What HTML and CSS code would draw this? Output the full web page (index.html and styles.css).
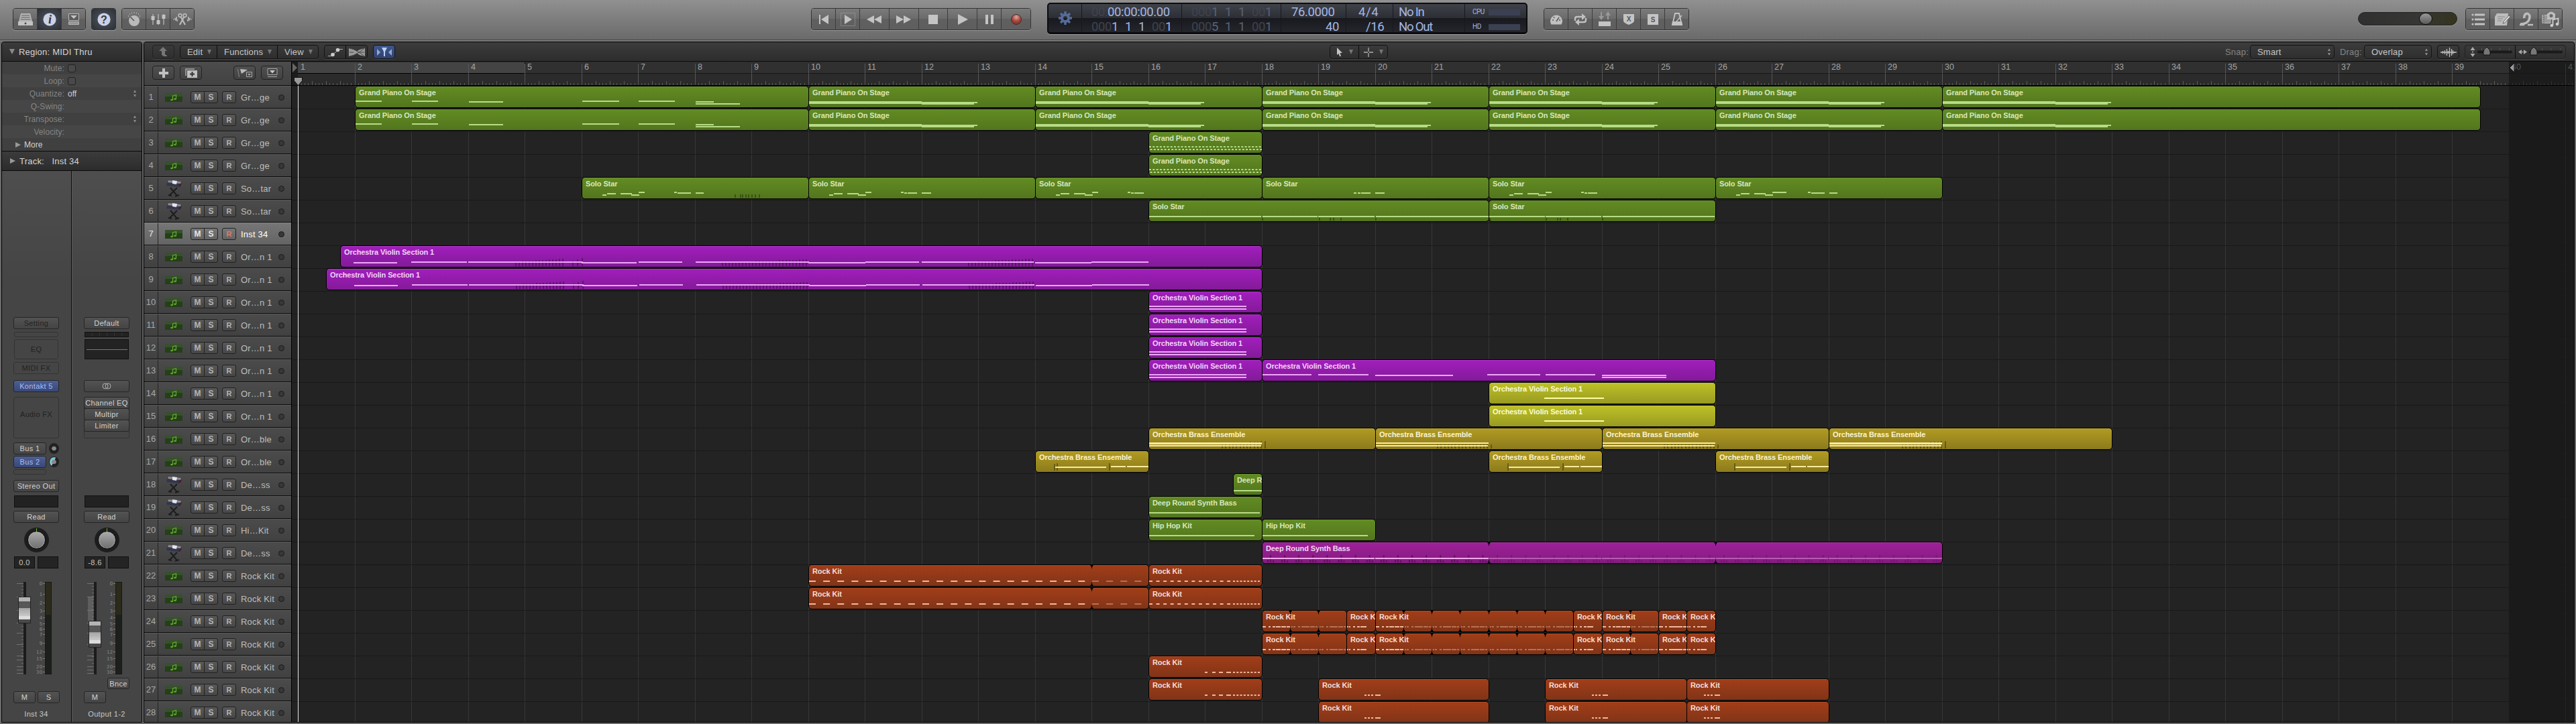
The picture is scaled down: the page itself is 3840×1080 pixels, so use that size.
FILE: index.html
```html
<!DOCTYPE html>
<html lang="en">

<head>
    <meta charset="UTF-8">
    <meta name="viewport" content="width=device-width, initial-scale=1.0">
    <title>Tracks</title>
    <link rel="stylesheet" href="styles.css">
</head>

<body>
    <!-- Control bar -->
    <header class="control-bar">
        <div class="btn-group left-a">
            <button class="btn"><svg width="24" height="22" viewBox="0 0 24 22"><path d="M5 2h14l3 12H2z" fill="#b5b5b5"/><path d="M6 5h12M5.4 8h13.2M4.6 11h14.8" stroke="#5c5c5c" stroke-width="1.2"/><path d="M1 14h22v6H1z" fill="#c2c2c2"/><circle cx="12" cy="17" r="1.4" fill="#444"/></svg></button>
            <button class="btn on"><svg width="20" height="20"><circle cx="10" cy="10" r="9.6" fill="#ccd2e4"/><text x="10.5" y="16" class="serif-glyph italic">i</text></svg></button>
            <button class="btn"><svg width="20" height="20"><path d="M2.500 1.500h15v10h-15z" fill="#5b5b5b" stroke="#b8b8b8"/><path d="M5 4h10l-5 5z" fill="#c4c4c4"/><path d="M2.500 13.500h15v4h-15z" fill="#969696" stroke="#b5b5b5"/></svg></button>
        </div>
        <div class="btn-group left-b">
            <button class="btn on"><svg width="20" height="20"><circle cx="10" cy="10" r="9.6" fill="#ccd2e4"/><text x="10" y="15.500" class="question-glyph">?</text></svg></button>
        </div>
        <div class="btn-group left-c">
            <button class="btn"><svg width="22" height="22"><circle cx="11" cy="13" r="8" fill="#bababa"/><path d="M11 13L5.500 7.500" stroke="#555" stroke-width="1.6"/><path d="M2 6h1M4 3h1M7 1.500h1M10.500 1h1M14 1.500h1M17 3h1M19 6h1" stroke="#c0c0c0" stroke-width="1.6"/></svg></button>
            <button class="btn"><svg width="22" height="20"><path d="M3 2v16M11 2v16M19 2v16" stroke="#b8b8b8" stroke-width="1.3"/><path d="M.500 5h5v6h-5zM8.500 11h5v6h-5zM16.500 3h5v6h-5z" fill="#c2c2c2"/></svg></button>
            <button class="btn"><svg width="28" height="20" fill="none" stroke="#b8b8b8"><path d="M0 10h2l1-2 1 4 1-6 1 7 1-3M28 10h-2l-1-2-1 4-1-6-1 7-1-3"/><circle cx="10.500" cy="4" r="2.400" stroke-width="1.6"/><circle cx="17.500" cy="4" r="2.400" stroke-width="1.6"/><path d="M11.500 6l6.500 12M16.500 6L10 18" stroke-width="2.300"/></svg></button>
        </div>

        <div class="btn-group transport">
            <button class="btn"><svg width="16" height="16" fill="#c4c4c4"><path d="M1 1h2v14H1zM15 1v14L4 8z"/></svg></button>
            <button class="btn"><svg width="24" height="22"><path d="M1.500 1.500h21v19h-21z" fill="none" stroke="#aaa" stroke-dasharray="1 1"/><path d="M7 4l11 7-11 7z" fill="#c4c4c4"/></svg></button>
            <button class="btn wide"><svg width="22" height="14" fill="#c4c4c4"><path d="M11 1v12L0 7zM22 1v12L11 7z"/></svg></button>
            <button class="btn wide"><svg width="22" height="14" fill="#c4c4c4"><path d="M0 1v12l11-6zM11 1v12l11-6z"/></svg></button>
            <button class="btn wide"><svg width="14" height="14" fill="#c4c4c4"><path d="M0 0h14v14H0z"/></svg></button>
            <button class="btn wide"><svg width="16" height="18" fill="#c4c4c4"><path d="M1 1v16l15-8z"/></svg></button>
            <button class="btn"><svg width="14" height="16" fill="#c4c4c4"><path d="M1 1h4v14H1zM9 1h4v14H9z"/></svg></button>
            <button class="btn wide"><span class="record"></span></button>
        </div>

        <div class="lcd">
            <div class="lcd-cell gear"><svg width="20" height="20" viewBox="-10 -10 20 20"><circle r="5" fill="none" stroke="#566b98" stroke-width="4"/><path d="M0-10V-6M0 10V6M-10 0H-6M10 0H6M-7-7l3 3M7 7L4 4M-7 7l3-3M7-7L4-4" stroke="#566b98" stroke-width="3.500"/></svg></div>
            <div class="lcd-cell time"><p><i>00:</i>00:00:00.00</p><p class="cells"><i>000</i>1 1 1 <i>00</i>1</p></div>
            <div class="lcd-cell locators"><p class="cells"><i>000</i>1 1 1 <i>00</i>1</p><p class="cells"><i>000</i>5 1 1 <i>00</i>1</p></div>
            <div class="lcd-cell tempo"><p>76.0000</p><p>40</p></div>
            <div class="lcd-cell sign"><p>4<b>/</b>4</p><p>/16</p></div>
            <div class="lcd-cell io"><p>No In</p><p>No Out</p></div>
            <div class="lcd-cell load"><p>CPU<span class="load-meter"></span></p><p>HD<span class="load-meter"></span></p></div>
        </div>

        <div class="btn-group modes">
            <button class="btn"><svg width="20" height="18"><path d="M2.500 16.500a9 9 0 1 1 15 0z" fill="#c0c0c0"/><path d="M10 12l4-6M4 10h2M6 5l1 2M14 10h2" stroke="#555" stroke-width="1.400"/></svg></button>
            <button class="btn"><svg width="22" height="18" fill="none" stroke="#c0c0c0" stroke-width="2.400"><path d="M3 11V8q0-3 3-3h8M19 7v3q0 3-3 3H8"/><path d="M13 0l6 5-6 5zM9 8l-6 5 6 5z" fill="#c0c0c0" stroke="none"/></svg></button>
            <button class="btn"><svg width="24" height="24"><path d="M7 1v8M17 12V3" stroke="#999" stroke-width="2"/><path d="M3 7h8l-4 6zM13 6h8l-4-6z" fill="#999"/><path d="M3 15h18v7H3z" fill="#c4c4c4"/></svg></button>
            <button class="btn"><svg width="16" height="16"><path d="M0 0h16v10q0 3-8 6-8-3-8-6z" fill="#c4c4c4"/><text x="8" y="11" class="tiny-glyph">X</text></svg></button>
            <button class="btn"><svg width="16" height="16"><path d="M0 0h16v16H0z" fill="#c4c4c4"/><text x="8" y="12" class="tiny-glyph">S</text></svg></button>
            <button class="btn"><svg width="18" height="19"><path d="M6 1h6l4 17H2z" fill="none" stroke="#c4c4c4" stroke-width="1.800"/><path d="M2 13h14l1 5H1z" fill="#c4c4c4"/><path d="M8 13l8-9" stroke="#c4c4c4" stroke-width="1.500"/></svg></button>
        </div>

        <div class="volume"><span class="volume-thumb"></span></div>

        <div class="btn-group panes">
            <button class="btn"><svg width="20" height="20" fill="#c2c2c2"><circle cx="2" cy="3" r="1.600"/><circle cx="2" cy="10" r="1.600"/><circle cx="2" cy="17" r="1.600"/><path d="M5 1.500h15v3H5zM5 8.500h15v3H5zM5 15.500h15v3H5z"/></svg></button>
            <button class="btn"><svg width="24" height="22"><path d="M4 2h17l-2 18H1V7z" fill="#bdbdbd"/><path d="M5 7h11M5 10h8M5 13h6" stroke="#888"/><path d="M22 5l-8 9-1 3 3-1 8-9z" fill="#ddd" stroke="#666"/></svg></button>
            <button class="btn"><svg width="22" height="24" fill="none" stroke="#bdbdbd"><path d="M8 10a4 5 0 1 1 8-3q0 7-5 10-4 2-9 2" stroke-width="3.500"/><path d="M1 20h7M13 20h8" stroke-width="2.500"/></svg></button>
            <button class="btn"><svg width="28" height="24"><path d="M2 5.500h12v12H2z" fill="#999" stroke="#bbb"/><path d="M4 5v13" stroke="#555" stroke-dasharray="2 1"/><path d="M9 3h12v9H9z" fill="#bdbdbd"/><circle cx="15" cy="6" r="5.500" fill="#bdbdbd"/><circle cx="15" cy="6.500" r="2.500" fill="#666"/><path d="M17.500 21V12.500l8-2V19" fill="none" stroke="#ccc" stroke-width="1.800"/><circle cx="15.800" cy="21" r="2.300" fill="#ccc"/><circle cx="24" cy="19" r="2.300" fill="#ccc"/></svg></button>
        </div>
    </header>

    <main class="workspace">
        <!-- Inspector -->
        <aside class="inspector">
            <h2 class="section-head"><span class="tri down"></span>Region: MIDI Thru</h2>
            <ul class="params">
                <li><label>Mute:</label><span class="check"></span></li>
                <li><label>Loop:</label><span class="check"></span></li>
                <li><label>Quantize:</label><span class="value">off</span><span class="stepper"></span></li>
                <li><label>Q-Swing:</label></li>
                <li><label>Transpose:</label><span class="stepper"></span></li>
                <li><label>Velocity:</label></li>
                <li class="more"><span class="tri right"></span>More</li>
            </ul>
            <h2 class="section-head track-head"><span class="tri right"></span>Track:&nbsp;&nbsp; Inst 34</h2>

            <div class="strips">
                <section class="strip">
                    <div class="slot off">Setting</div>
                    <div class="slot hollow reduction"></div>
                    <div class="slot hollow eq">EQ</div>
                    <div class="slot hollow midi">MIDI FX</div>
                    <div class="slot blue instrument">Kontakt 5</div>
                    <div class="slot hollow fx">Audio FX</div>
                    <div class="send send-1"><div class="slot">Bus 1</div><span class="send-knob"></span></div>
                    <div class="send send-2"><div class="slot blue">Bus 2</div><span class="send-knob lit"></span></div>
                    <div class="slot hollow send-empty"></div>
                    <div class="slot output">Stereo Out</div>
                    <div class="group-box"></div>
                    <div class="slot mode">Read</div>
                    <div class="pan"><span class="pan-cap"></span></div>
                    <div class="readouts"><span>0.0</span><span></span></div>
                    <div class="fader" data-cap="22"></div>
                    <div class="bounce-row"></div>
                    <div class="ms-row"><div class="slot">M</div><div class="slot">S</div></div>
                    <div class="strip-name">Inst 34</div>
                </section>
                <section class="strip">
                    <div class="slot">Default</div>
                    <div class="reduction-on"></div>
                    <div class="eq-curve"></div>
                    <div class="midi-gap"></div>
                    <div class="slot instrument"><svg width="14" height="10" fill="none" stroke="#b0b0b0"><circle cx="5" cy="5" r="4"/><circle cx="9" cy="5" r="4"/></svg></div>
                    <div class="slot hollow fx stack"><div class="slot">Channel EQ</div><div class="slot">Multipr</div><div class="slot">Limiter</div></div>
                    <div class="out-gap"></div>
                    <div class="group-box"></div>
                    <div class="slot mode">Read</div>
                    <div class="pan"><span class="pan-cap"></span></div>
                    <div class="readouts"><span>-8.6</span><span></span></div>
                    <div class="fader" data-cap="58" data-mesh="36"></div>
                    <div class="bounce-row"><div class="slot">Bnce</div></div>
                    <div class="ms-row"><div class="slot">M</div></div>
                    <div class="strip-name">Output 1-2</div>
                </section>
            </div>
        </aside>

        <!-- Tracks area -->
        <section class="tracks-area">
            <div class="tracks-bar">
                <div class="tool faint"><svg width="14" height="15"><path d="M6 0l6 6H9v5l3 2v1H8q-3 0-4-3V6H0z" fill="#777"/></svg></div>
                <div class="menus"><span class="edit">Edit<em class="tri down"></em></span><span class="functions">Functions<em class="tri down"></em></span><span class="view">View<em class="tri down"></em></span></div>
                <div class="pair">
                    <span><svg width="22" height="14"><path d="M0 12.500h6M6 11l9-7M16 2.500h6" stroke="#aaa" fill="none"/><circle cx="7" cy="10.500" r="2.800" fill="#ccc"/><circle cx="14.500" cy="3.500" r="2.800" fill="#ccc"/></svg></span>
                    <span><svg width="24" height="14"><path d="M0 1q8 1 12 4.500Q16 2 24 1v12q-8-1-12-4.500Q8 12 0 13z" fill="#999"/><path d="M1 7h6M23 7h-6M1 1q11 2 22 12M1 13Q12 11 23 1" stroke="#444" fill="none"/></svg></span>
                </div>
                <div class="tool blue-tool"><svg width="22" height="16" fill="#b9d0ff"><path d="M7 1h8l-3 6v7h-2V7z"/><path d="M0 3l5 5-5 5zM22 3l-5 5 5 5z" opacity=".7"/></svg></div>
                <div class="pair pointers">
                    <span><svg width="10" height="14"><path d="M1 0l8 8H5.500L7 13H5L3.500 9 1 11z" fill="#c4c4c4"/></svg><em class="tri down"></em></span>
                    <span><svg width="14" height="14"><path d="M7 0v6M7 8v6M0 7h6M8 7h6" stroke="#b0b0b0" stroke-width="1.300"/></svg><em class="tri down"></em></span>
                </div>
                <div class="bar-label snap">Snap:</div>
                <div class="select snap-select">Smart<span class="stepper"></span></div>
                <div class="bar-label drag">Drag:</div>
                <div class="select drag-select">Overlap<span class="stepper"></span></div>
                <div class="tool wave"><svg width="24" height="14" stroke="#c0c0c0" stroke-width="1.300"><path d="M0 7h24M3.500 5v4M6.500 4v6M9.500 2v10M11.500 5v4M13.500 0v14M16.500 2v10M18.500 4v6M20.500 6v2"/></svg></div>
                <div class="zooms">
                    <span><svg width="74" height="20"><path d="M11 2l3.500 5h-7zM11 17l3.500-5h-7z" fill="#aaa"/><circle cx="11" cy="9.500" r="1.100" fill="#aaa"/><path d="M20 9.500h48" stroke="#1a1a1a" stroke-width="4" stroke-linecap="round"/><path d="M24.500 4v3M28.500 4v3M38.500 4v3M51.500 4v3M65.500 4v3" stroke="#555"/><path d="M32 2q5 4 5 7v5H27V9q0-3 5-7z" fill="#777" stroke="#111"/></svg></span>
                    <span><svg width="74" height="20"><path d="M4 9.500l5-3.500v7zM17 9.500l-5-3.500v7z" fill="#aaa"/><circle cx="10.500" cy="9.500" r="1" fill="#aaa"/><path d="M22 9.500h46" stroke="#1a1a1a" stroke-width="4" stroke-linecap="round"/><path d="M39.500 4v3M52.500 4v3M66.500 4v3" stroke="#555"/><path d="M27 2q5 4 5 7v5H22V9q0-3 5-7z" fill="#777" stroke="#111"/></svg></span>
                </div>
            </div>

            <div class="tracks-body">
                <div class="track-list">
                    <div class="list-head">
                        <div class="tool"><svg width="14" height="14"><path d="M5 0h4v5h5v4H9v5H5V9H0V5h5z" fill="#c0c0c0"/></svg></div>
                        <div class="tool"><svg width="18" height="14"><path d="M1 11V1h13" fill="none" stroke="#aaa" stroke-width="1.500"/><path d="M3 3h15v11H3z" fill="#c0c0c0"/><path d="M10.500 5v7M7 8.500h7" stroke="#333" stroke-width="2"/></svg></div>
                        <div class="tool third"><svg width="24" height="14"><path d="M1.500 1l2 12" stroke="#888"/><path d="M5 1l11 1-9 6z" fill="#bbb"/><path d="M14.500 5.500h8v7h-8z" fill="none" stroke="#aaa"/><path d="M16 8h5l-2.500 3z" fill="#aaa"/></svg></div>
                        <div class="tool"><svg width="16" height="14"><path d="M1 .500h14v9H1zM1 12.500h14" fill="#444" stroke="#aaa"/><path d="M4 3h8L8 7.500z" fill="#ccc"/></svg></div>
                    </div>
                    <div id="trackRows"></div>
                </div>
                <div class="timeline" id="timeline">
                    <svg class="ruler" id="ruler" width="3402" height="36"></svg>
                    <svg class="grid" id="grid" width="3402" height="949"></svg>
                    <div class="regions" id="regions"></div>
                    <div class="playhead"><svg width="15" height="14"><path d="M1.500 1.500h12v5l-6 7-6-7z" fill="#999" stroke="#111"/></svg></div>
                </div>
            </div>
        </section>
    </main>

    <script src="script.js"></script>
</body>

</html>
```

FILE: styles.css
```css
* {
    box-sizing: border-box;
}

body {
    margin: 0;
    width: 3840px;
    height: 1080px;
    overflow: hidden;
    display: flex;
    flex-direction: column;
    background: #6a6a6a;
    color: #c6c6c6;
    font-family: "Liberation Sans", Arial, sans-serif;
    font-size: 13px;
}

svg {
    display: block;
    flex: none;
}

p,
ul,
h2 {
    margin: 0;
    padding: 0;
}

/* Control bar */
.control-bar {
    height: 62px;
    flex: none;
    display: flex;
    align-items: flex-start;
    padding: 12px 20px 0 19px;
    background: linear-gradient(#909090, #6a6a6a 59px, #444 59px, #444 60px, #7c7c7c 60px);
}

.btn-group {
    display: flex;
    height: 33px;
    border: 1px solid #343434;
    border-radius: 4px;
    box-shadow: 0 1px 0 #9a9a9a;
    overflow: hidden;
}

.btn {
    flex: 1;
    display: flex;
    align-items: center;
    justify-content: center;
    padding: 0;
    border: none;
    border-left: 1px solid #3c3c3c;
    background: linear-gradient(#7b7b7b, #6a6a6a 50%, #606060 50%, #5e5e5e);
}

.btn:first-child {
    border-left: none;
}

.btn.on {
    background: radial-gradient(#525862, #2b2e34);
}

.left-a,
.left-c {
    width: 109px;
}

.left-b {
    width: 37px;
    margin: 0 8px;
}

.transport {
    width: 328px;
    margin-left: 919px;
}

.transport .btn {
    flex: 36;
}

.transport .btn.wide {
    flex: 44;
}

.record {
    width: 16px;
    height: 16px;
    border-radius: 50%;
    border: 1px solid #4a2a28;
    background: radial-gradient(circle at 50% 25%, #e0a8a0, #a4453c 50%, #7c2a25);
}

.serif-glyph {
    font: italic bold 18px "Liberation Serif", serif;
    text-anchor: middle;
    fill: #33373f;
}

.question-glyph {
    font: bold 16px "Liberation Sans", sans-serif;
    text-anchor: middle;
    fill: #33373f;
}

.tiny-glyph {
    font: bold 10px "Liberation Sans", sans-serif;
    text-anchor: middle;
    fill: #555;
}

/* LCD */
.lcd {
    display: flex;
    width: 716px;
    height: 47px;
    margin: -8px 0 0 24px;
    border: 2px solid #0c0c0f;
    border-bottom-width: 3px;
    border-radius: 5px;
    box-shadow: 0 1px 0 #a0a0a0;
    background: linear-gradient(#40424a, #2c2e35 50%, #17191e 50%, #24262c);
    color: #a4b8e4;
    font-family: Roboto, sans-serif;
    font-size: 18.500px;
    letter-spacing: -.4px;
}

.lcd-cell {
    border-left: 1px solid #17181c;
    padding-top: 1px;
}

.lcd-cell p {
    height: 22px;
    line-height: 22px;
    white-space: nowrap;
}

.lcd-cell i {
    font-style: normal;
    color: #3f434d;
}

.gear {
    width: 49px;
    border-left: none;
    display: flex;
    align-items: center;
    justify-content: center;
    padding: 0;
}

.time {
    width: 149px;
    padding-left: 14px;
}

.cells {
    word-spacing: 5.800px;
}

.locators {
    width: 148px;
    padding-left: 14px;
    color: #5a6377;
}

.tempo {
    width: 97px;
    padding-left: 15px;
}

.tempo p + p {
    padding-left: 51px;
}

.sign {
    width: 70px;
    padding-left: 18px;
}

.sign b {
    font-weight: 400;
    margin: 0 1px;
}

.sign p + p {
    padding-left: 11px;
}

.io {
    width: 107px;
    padding-left: 8px;
    letter-spacing: -1.200px;
}

.load {
    flex: 1;
    padding-left: 11px;
    font-size: 10px;
    letter-spacing: -.5px;
}

.load p {
    display: flex;
    align-items: center;
    justify-content: space-between;
    padding-right: 9px;
}

.load-meter {
    width: 47px;
    height: 9px;
    background: #3b4152;
}

.modes {
    width: 217px;
    margin-left: 24px;
}

.volume {
    width: 148px;
    height: 20px;
    margin: 6px 0 0 997px;
    border-radius: 10px;
    border: 1px solid #222;
    background: linear-gradient(90deg, #2f302f, #363734 60%, #35331e);
    box-shadow: 0 1px 0 #999;
    padding-left: 90px;
}

.volume-thumb {
    display: block;
    width: 20px;
    height: 18px;
    border-radius: 50%;
    border: 1px solid #111;
    background: linear-gradient(#999, #5a5a5a);
}

.panes {
    width: 145px;
    margin-left: 12px;
}

/* Workspace */
.workspace {
    display: flex;
    height: 1016px;
    padding-left: 2px;
}

.inspector {
    width: 210px;
    border: 1px solid #000;
    border-radius: 4px 4px 0 0;
    display: flex;
    flex-direction: column;
    background: #454545;
    overflow: hidden;
}

.section-head {
    display: flex;
    align-items: center;
    height: 29px;
    flex: none;
    padding-left: 11px;
    font-size: 13px;
    font-weight: 400;
    letter-spacing: .22px;
    color: #d4d4d4;
    background: linear-gradient(#3b3b3b, #2c2c2c);
    border-bottom: 1px solid #0a0a0a;
}

.track-head {
    border-top: 1px solid #0a0a0a;
    height: 30px;
}

.tri {
    display: inline-block;
    border: 4px solid transparent;
}

.tri.down {
    border-top: 8px solid #8a8a8a;
    border-bottom: none;
}

.tri.right {
    border-left: 8px solid #999;
    border-right: none;
}

.section-head .tri {
    margin-right: 6px;
}

.section-head .tri.right {
    margin-left: 1px;
}

.params {
    list-style: none;
    height: 133px;
    flex: none;
}

.params li {
    display: flex;
    align-items: center;
    height: 19px;
    color: #d0d0d0;
    font-size: 12px;
    background: #404040;
}

.params li:nth-child(even) {
    background: #464646;
}

.params label {
    width: 93px;
    text-align: right;
    color: #858585;
    letter-spacing: .1px;
    margin-right: 5px;
}

.check {
    width: 12px;
    height: 12px;
    border: 1px solid #222;
    border-radius: 3px;
    background: #494949;
}

.params .more {
    padding-left: 20px;
    gap: 5px;
}

.stepper {
    width: 6px;
    height: 11px;
    margin-left: auto;
    background:
        conic-gradient(from 153deg at 50% 0, #888 54deg, transparent 0) top / 6px 4px no-repeat,
        conic-gradient(from -27deg at 50% 100%, #888 54deg, transparent 0) bottom / 6px 4px no-repeat;
}

.params .stepper {
    margin-right: 7px;
}

/* Channel strips */
.strips {
    display: flex;
    flex: 1;
    background: linear-gradient(#4e4e4e, #454545 20%);
}

.strip {
    width: 104px;
    padding: 218px 18px 0 17px;
    border-right: 1px solid #0c0c0c;
    display: flex;
    flex-direction: column;
    font-size: 11px;
    letter-spacing: .35px;
}

.strip > * {
    flex: none;
}

.strip + .strip {
    border-left: 1px solid #5a5a5a;
    border-right: none;
}

.slot {
    height: 18px;
    display: flex;
    align-items: center;
    justify-content: center;
    white-space: nowrap;
    border: 1px solid #262626;
    border-radius: 3px;
    background: linear-gradient(#535353, #444);
    color: #d2d2d2;
    flex: none;
}

.slot.off {
    color: #222;
}

.slot.hollow {
    background: none;
    border-color: #333;
    color: #222;
}

.slot.blue {
    background: linear-gradient(#4d5f94, #384876);
    color: #a9bcf8;
}

.slot.reduction,
.reduction-on {
    height: 8px;
    margin: 4px 1px 0;
}

.reduction-on {
    border: 1px solid #111;
    background: repeating-linear-gradient(90deg, #222 0 10px, #333 10px 11px);
}

.slot.eq,
.eq-curve {
    height: 30px;
    margin: 3px 1px 0;
}

.eq-curve {
    border: 1px solid #111;
    background: linear-gradient(transparent 14px, #777 14px, #777 15px, transparent 15px) center / 61px no-repeat, #232323;
}

.slot.midi {
    height: 18px;
    margin-top: 4px;
}

.midi-gap {
    height: 22px;
}

.instrument {
    margin-top: 9px;
}

.slot.fx {
    height: 62px;
    margin-top: 7px;
    padding-bottom: 10px;
}

.slot.fx.stack {
    flex-direction: column;
    justify-content: flex-start;
    align-items: stretch;
    padding: 0;
}

.stack .slot {
    height: 18px;
    margin: 0 -1px -1px;
}

.stack .slot:first-child {
    margin-top: -1px;
}

.send {
    display: flex;
    gap: 4px;
}

.send .slot {
    width: 49px;
}

.send-1 {
    margin-top: 6px;
}

.send-2 {
    margin-top: 2px;
}

.send-knob {
    width: 16px;
    height: 16px;
    margin-top: 1px;
    border-radius: 50%;
    border: 1px solid #222;
    background: radial-gradient(circle, #888 0 3px, #222 3.500px);
}

.send-knob.lit {
    background: radial-gradient(circle, #888 0 3px, transparent 3.500px), conic-gradient(from 210deg, #7fc3d4 170deg, #222 0);
}

.slot.send-empty {
    width: 49px;
    height: 8px;
    margin-top: 2px;
}

.output {
    margin-top: 8px;
}

.out-gap {
    height: 80px;
}

.group-box {
    height: 18px;
    margin: 5px 1px 0;
    border: 1px solid #111;
    background: #222;
}

.mode {
    margin-top: 5px;
}

.pan {
    width: 37px;
    height: 37px;
    margin: 7px auto 0;
    border-radius: 50%;
    background: #1d1d1d;
    padding: 5px;
}

.pan-cap {
    display: block;
    width: 27px;
    height: 27px;
    border-radius: 50%;
    border: 1px solid #0a0a0a;
    background: linear-gradient(#ababab, #6f6f6f);
    box-shadow: inset 0 0 0 1px #aaa;
    position: relative;
}

.pan-cap::before {
    content: "";
    position: absolute;
    left: 12px;
    top: -5px;
    width: 1px;
    height: 5px;
    background: #6ab52c;
}

.readouts {
    display: flex;
    justify-content: space-between;
    margin: 6px 1px 0;
}

.readouts span {
    width: 31px;
    height: 18px;
    line-height: 16px;
    text-align: center;
    border: 1px solid #101010;
    background: #242424;
}

.fader {
    height: 144px;
    margin-top: 14px;
}

.fader-label {
    font: 7px "DejaVu Sans", sans-serif;
    text-anchor: end;
    fill: #8a8a8a;
}

.bounce-row {
    height: 17px;
    margin-top: 5px;
    display: flex;
    justify-content: flex-end;
}

.bounce-row .slot {
    width: 33px;
    height: 17px;
}

.ms-row {
    display: flex;
    gap: 3px;
    margin-top: 3px;
}

.ms-row .slot {
    width: 33px;
}

.strip-name {
    margin: 10px -10px 0;
    line-height: 13px;
    text-align: center;
    white-space: nowrap;
}

/* Tracks toolbar */
.tracks-area {
    width: 3624px;
    margin-left: 2px;
    border: 1px solid #000;
    border-radius: 4px 4px 0 0;
    background: #232323;
    overflow: hidden;
}

.tracks-bar {
    display: flex;
    align-items: flex-start;
    height: 29px;
    padding: 4px 0 0 12px;
    border-bottom: 1px solid #0a0a0a;
    background: linear-gradient(#3c3c3c, #2d2d2d);
    letter-spacing: .2px;
}

.tool,
.menus,
.pair,
.select,
.zooms {
    height: 21px;
    border: 1px solid #141414;
    border-radius: 4px;
    background: linear-gradient(#3a3a3a, #2e2e2e);
    box-shadow: 0 1px 0 #454545;
    display: flex;
    align-items: center;
    flex: none;
}

.tool {
    width: 33px;
    justify-content: center;
}

.faint {
    border-color: #222;
}

.menus {
    width: 207px;
    margin-left: 8px;
}

.menus span,
.pair span,
.zooms span {
    display: flex;
    height: 100%;
    align-items: center;
    border-left: 1px solid #0c0c0c;
}

.menus span:first-child,
.pair span:first-child,
.zooms span:first-child {
    border-left: none;
}

.menus span {
    padding-left: 10px;
    gap: 7px;
}

.tracks-bar .tri {
    border-width: 3.500px;
    border-top: 7px solid #777;
    border-bottom: none;
}

.edit {
    width: 54px;
}

.functions {
    width: 90px;
}

.pair {
    width: 65px;
    margin-left: 8px;
}

.pair span {
    flex: 1;
    justify-content: center;
}

.blue-tool {
    margin-left: 8px;
    background: linear-gradient(#40568c, #30416c);
}

.pointers {
    width: 87px;
    margin-left: 1393px;
}

.pointers span {
    gap: 9px;
}

.bar-label {
    line-height: 21px;
    color: #858585;
}

.snap {
    width: 37px;
    margin-left: 1248px;
}

.drag {
    width: 36px;
    margin-left: 8px;
}

.select {
    padding: 0 4px 0 10px;
}

.snap-select {
    width: 126px;
}

.drag-select {
    width: 101px;
}

.wave {
    margin-left: 8px;
}

.zooms {
    width: 151px;
    margin-left: 8px;
    border-color: #222;
}

/* Track list */
.tracks-body {
    display: flex;
}

.track-list {
    width: 220px;
    flex: none;
    border-right: 1px solid #000;
}

.list-head {
    display: flex;
    gap: 8px;
    height: 36px;
    padding: 6px 0 0 12px;
    background: linear-gradient(#4c4c4c, #424242);
    border-bottom: 1px solid #0a0a0a;
}

.list-head .tool {
    border-color: #222;
    background: linear-gradient(#505050, #414141);
}

.list-head .third {
    margin-left: 39px;
}

.track {
    display: flex;
    align-items: center;
    height: 34px;
    border-top: 1px solid #595959;
    border-bottom: 1px solid #0c0c0c;
    background: linear-gradient(#4b4b4b, #414141);
    color: #bebebe;
}

.track-no {
    width: 21px;
    height: 32px;
    line-height: 32px;
    text-align: center;
    border-right: 1px solid #242424;
    color: #a9a9a9;
}

.track-icon {
    width: 26px;
    margin: 0 12px 0 10px;
}

.ms,
.rec {
    display: flex;
    height: 18px;
    border: 1px solid #212121;
    border-radius: 3px;
    background: linear-gradient(#585858, #474747);
    font-size: 12px;
    font-weight: bold;
    color: #b4b4b4;
    line-height: 16px;
    text-align: center;
}

.ms {
    width: 41px;
}

.ms span {
    flex: 1;
}

.ms span + span {
    border-left: 1px solid #212121;
}

.rec {
    width: 21px;
    margin: 0 7px 0 6px;
    justify-content: center;
    font-size: 11px;
}

.track-name {
    width: 56px;
    white-space: nowrap;
    letter-spacing: .2px;
}

.freeze {
    width: 9px;
    height: 9px;
    border: 1px solid #1b1b1b;
    border-radius: 50%;
    background: #373737;
}

.track.selected {
    background: linear-gradient(#767676, #646464);
    border-top-color: #858585;
    color: #fff;
}

.track.selected .track-no,
.track.selected .ms {
    color: #e6e6e6;
}

.track.selected .ms,
.track.selected .rec {
    background: linear-gradient(#777, #626262);
}

.track.selected .rec {
    color: #e07a68;
}

/* Timeline: regions sit on a free canvas by bar position */
.timeline {
    position: relative;
    width: 3402px;
    overflow: hidden;
}

.ruler-no {
    font: 12.500px "Liberation Sans", sans-serif;
    fill: #a4a4a4;
}

.regions {
    position: absolute;
    left: 0;
    top: 36px;
}

.region {
    position: absolute;
    height: 33px;
    border: 1px solid #000;
    border-radius: 5px;
    overflow: hidden;
}

.region-name {
    position: absolute;
    left: 5px;
    top: 3px;
    font-size: 11px;
    line-height: 13px;
    font-weight: bold;
    letter-spacing: -.1px;
    white-space: nowrap;
}

.region svg {
    position: absolute;
    left: 0;
    top: -1px;
}

.green {
    background: linear-gradient(#7aa044, #628b22 1px, #53751e);
    color: #d8e6bc;
    fill: #b7dc86;
}

.purple {
    background: linear-gradient(#bd4fd2, #a11ebc 1px, #831a98);
    color: #f1d3f8;
    fill: #efa6fb;
}

.magenta {
    background: linear-gradient(#b54db0, #9d2098 1px, #841c80);
    color: #f3d4f1;
    fill: #f3a7ee;
}

.yellow {
    background: linear-gradient(#ced05a, #bdc026 1px, #989a22);
    color: #fbfbd2;
    fill: #fefea2;
}

.gold {
    background: linear-gradient(#c4b153, #b09a22 1px, #8c7b1d);
    color: #fbf3cf;
    fill: #fbeb9c;
}

.orange {
    background: linear-gradient(#b8603d, #a13d18 1px, #813418);
    color: #f5ded5;
    fill: #f4b69a;
}

.playhead {
    position: absolute;
    left: 9px;
    top: 36px;
    width: 1px;
    height: 949px;
    background: #e4e4e4;
}

.playhead svg {
    position: absolute;
    left: -7px;
    top: -14px;
}
```

FILE: script.js
```js
const BAR = 84.5;
const ROW = 34;
const barX = n => Math.floor(9.5 + BAR * (n - 1));

// ---------- track headers ----------
const names = ["Gr…ge", "Gr…ge", "Gr…ge", "Gr…ge", "So…tar", "So…tar", "Inst 34",
    "Or…n 1", "Or…n 1", "Or…n 1", "Or…n 1", "Or…n 1", "Or…n 1", "Or…n 1", "Or…n 1",
    "Or…ble", "Or…ble", "De…ss", "De…ss", "Hi…Kit", "De…ss",
    "Rock Kit", "Rock Kit", "Rock Kit", "Rock Kit", "Rock Kit", "Rock Kit", "Rock Kit"];
const keyboards = [5, 6, 18, 19, 21];

const noteIcon = `<svg class="track-icon" width="26" height="13"><rect width="26" height="13" fill="#243f19"/>
    <rect width="26" height="5" fill="#35522a"/><path d="M11.500 10V4l5-1.500v6" fill="none" stroke="#62a52c" stroke-width="1.300"/>
    <ellipse cx="10" cy="10" rx="1.900" ry="1.300" fill="#62a52c"/><ellipse cx="15" cy="8.800" rx="1.900" ry="1.300" fill="#62a52c"/></svg>`;
const keysIcon = `<svg class="track-icon" width="26" height="28"><path d="M8 13l10 12M18 13L7 24M5 24l5 1M15 26l6-2" stroke="#1d1d1f" stroke-width="2"/>
    <path d="M4 2l21 2-3 8-20-2z" fill="#34364d"/><path d="M5 2l19 2-1 3-19-2z" fill="#8f8a8c"/><path d="M11 2l7 1-1 5-6-1z" fill="#e2e6ee"/>
    <path d="M22 7l3 0-2 4-3 1z" fill="#4a1f22"/></svg>`;

document.getElementById("trackRows").innerHTML = names.map((name, i) => `
    <div class="track ${i === 6 ? "selected" : ""}">
        <span class="track-no">${i + 1}</span>
        ${keyboards.includes(i + 1) ? keysIcon : noteIcon}
        <span class="ms"><span>M</span><span>S</span></span>
        <span class="rec">R</span>
        <span class="track-name">${name}</span>
        <span class="freeze"></span>
    </div>`).join("");

// ---------- ruler and grid ----------
let ruler = `<rect width="3402" height="36" fill="#303030"/>
    <rect y="18" width="3402" height="18" fill="#2b2b2b"/>
    <rect x="9" y="1" width="338" height="16" fill="#444"/>
    <rect width="9" height="36" fill="#1c1c1c"/>
    <rect x="3305" width="97" height="36" fill="#1c1c1c"/>
    <rect y="17" width="3402" height="1" fill="#171717"/>
    <rect x="9" y="17" width="338" height="1" fill="#000"/><rect x="347" y="1" width="1" height="17" fill="#000"/>`;
let grid = `<rect width="3402" height="949" fill="#232323"/><rect x="3305" width="97" height="949" fill="#1a1a1a"/>`;

for (let n = 1; n <= 41; n++) {
    const x = barX(n);
    const out = n >= 40;
    if (n > 1 && n !== 40) {
        ruler += `<rect x="${x}" y="3" width="1" height="32" fill="${out ? "#333" : "#565656"}"/>`;
        grid += `<rect x="${x}" width="1" height="949" fill="${out ? "#242424" : "#373737"}"/>`;
    }
    ruler += `<text class="ruler-no" x="${x + 4}" y="12" ${out ? 'opacity=".4"' : ""}>${n}</text>`;
    for (let t = 1; t < 16; t++) {
        const h = t % 4 === 0 ? 6 : 3;
        ruler += `<rect x="${Math.floor(x + t * BAR / 16)}" y="${35 - h}" width="1" height="${h}" fill="${out ? "#333" : "#5c5c5c"}"/>`;
    }
}
for (let r = 1; r < 28; r++) {
    grid += `<rect y="${r * ROW}" width="3402" height="1" fill="#191919"/>`;
}
ruler += `<path d="M1 2l7 7-7 7z" fill="#666"/><path d="M3313 2l-7 7 7 7z" fill="#999" stroke="#111"/>
    <rect y="35" width="3402" height="1" fill="#000"/>`;
document.getElementById("ruler").innerHTML = ruler;
document.getElementById("grid").innerHTML = grid;

// ---------- notes: [x from, x to, y, height] ----------
const dashes = (from, to, step, len, y) => {
    const out = [];
    for (let x = from; x < to; x += step) out.push([x, x + len, y]);
    return out;
};
const shift = (list, dx) => list.map(([a, b, ...rest]) => [a + dx, b + dx, ...rest]);
const at = (y, ...pairs) => pairs.map(([a, b]) => [a, b, y]);
// controller ticks, drawn in a darker shade: [x, top, bottom]
const ticks = (from, to, step, top) => {
    const out = [];
    for (let x = from; x <= to; x += step) {
        out.push([Math.round(x), top === undefined ? 25 : Math.round(top - 4 * (x - from) / (to - from)), 31]);
    }
    return out;
};

const piano1 = [[0, 39, 22], [84, 123, 22], [169, 220, 23], [338, 393, 22], [422, 476, 22], [507, 534, 23], [507, 573, 26]];
const piano2 = [[0, 168, 23, 4], [168, 246, 24, 4], [246, 251, 24]];
const piano3 = [...dashes(0, 166, 5.28, 3, 22), ...dashes(1.5, 166, 5.28, 3, 26)];
const soloIn = [[30, 36, 26], [37, 50, 24], [57, 74, 24], [73, 85, 26], [84, 93, 22], [137, 141, 22]];
const soloA = [...soloIn, [142, 162, 23], [169, 181, 23]];
const soloB = [...soloIn, [142, 146, 23], [147, 161, 23], [168, 182, 23]];
const soloC = soloB.slice(0, -1);
const soloD = [[136, 140, 23], [142, 146, 23], [147, 161, 23], [168, 182, 23]];
const soloF = [...soloA, [93, 105, 22]];
const violin = [[19, 84, 25], [105, 188, 24], [190, 361, 24], [359, 441, 25], [444, 509, 24], [529, 698, 24],
    [697, 782, 25], [782, 862, 24], [866, 1033, 24], [1035, 1119, 25], [1119, 1204, 24]];
const violinTicks = [...ticks(260, 334, 5, 24), ...ticks(345, 360, 7, 23), ...ticks(568, 697, 5, 25), ...ticks(935, 1031, 5, 24)];
const violin2 = at(22, [0, 145]).concat(at(26, [0, 145]));
const violin3 = [[0, 73, 22], [83, 158, 22], [168, 284, 23], [335, 414, 22], [422, 496, 22], [506, 602, 23], [506, 602, 26]];
const brass = [[0, 168, 22, 3], [0, 167, 26]];
const brassTicks = ticks(108, 172, 5.3, 24);
const brass2 = [[29, 105, 24], [112, 134, 23], [136, 168, 23]];
const kitLong = dashes(0, 420, 21.12, 10, 24);
const kitShort = [...dashes(0, 120, 10.56, 5, 24), ...dashes(125, 166, 5.28, 3, 24)];
const kitFill = [[83, 87, 24], [94, 99, 24], [104, 110, 24], [115, 122, 24], ...dashes(125, 166, 5.28, 3, 24)];
const kitBeat = at(24, [0, 5], [9, 12], [15, 19], [20, 27], [28, 35], [36, 41]);
const kitEnd = at(24, [0, 2], [3, 5], [9, 12], [15, 19], [20, 29]);
const kitLoop = at(24, [1, 3], [4, 7], [11, 14], [16, 28], [29, 36], [37, 40]);
const kitTail = dx => shift(at(24, [0, 3], [5, 8], [10, 13], [16, 24]), dx);
const bass = [[0, 167, 24], [168, 337, 24]];
const bassTicks = [];
for (let i = 0; i < 16; i++) {
    const x = i * 21.1;
    bassTicks.push([x + 7, 27, 31], [x + 11, 20, 31], [x + 15, 28, 31]);
}

// [row, start bar, end bar, colour, name, notes, ticks, loops]
const regions = [];
for (const row of [1, 2]) {
    regions.push([row, 2, 10, "green", "Grand Piano On Stage", piano1]);
    for (const b of [10, 14, 18, 22, 26]) regions.push([row, b, b + 4, "green", "Grand Piano On Stage", piano2]);
    regions.push([row, 30, 39.5, "green", "Grand Piano On Stage", piano2]);
    regions.push([row + 2, 16, 18, "green", "Grand Piano On Stage", piano3]);
}
[soloA, soloB, soloC, soloD, soloC, soloF].forEach((notes, i) => {
    regions.push([5, 6 + i * 4, 10 + i * 4, "green", "Solo Star", notes, i ? [] : [227, 235, 238, 243, 247, 252, 257, 263].map(x => [x, 26, 31])]);
});
regions.push(
    [6, 16, 22, "green", "Solo Star", at(24, [0, 167], [169, 251], [252, 336], [338, 506]), [168, 253, 269, 274, 285, 337].map(x => [x, 27, 31])],
    [6, 22, 26, "green", "Solo Star", at(24, [0, 83], [84, 167], [169, 336]), [0, 84, 101, 105, 116, 168].map(x => [x, 27, 31])],
    [8, 1.75, 18, "purple", "Orchestra Violin Section 1", violin, violinTicks],
    [9, 1.5, 18, "purple", "Orchestra Violin Section 1", shift(violin, 22), violinTicks.map(t => [t[0] + 22, t[1], t[2]])],
    [13, 18, 26, "purple", "Orchestra Violin Section 1", violin3],
    [14, 22, 26, "yellow", "Orchestra Violin Section 1", [[82, 171, 23]]],
    [15, 22, 26, "yellow", "Orchestra Violin Section 1", [[82, 171, 23]]],
    [16, 16, 20, "gold", "Orchestra Brass Ensemble", brass, brassTicks],
    [16, 20, 24, "gold", "Orchestra Brass Ensemble", at(22, [0, 168]).concat(at(26, [0, 167])), ticks(91, 172, 5.3)],
    [16, 24, 28, "gold", "Orchestra Brass Ensemble", at(22, [0, 168]).concat(at(26, [0, 167])), ticks(91, 172, 5.3)],
    [16, 28, 33, "gold", "Orchestra Brass Ensemble", brass, brassTicks],
    [17, 14, 16, "gold", "Orchestra Brass Ensemble", brass2, [[27, 20, 30], [31, 19, 30], [109, 19, 30]]],
    [17, 22, 24, "gold", "Orchestra Brass Ensemble", brass2, [[27, 19, 30], [109, 19, 30]]],
    [17, 26, 28, "gold", "Orchestra Brass Ensemble", brass2, [[27, 19, 30], [109, 19, 30]]],
    [18, 17.5, 18, "green", "Deep Round Synth Bass", [[0, 42, 25]]],
    [19, 16, 18, "green", "Deep Round Synth Bass", [[0, 165, 24]]],
    [20, 16, 18, "green", "Hip Hop Kit", [[0, 157, 24]]],
    [20, 18, 20, "green", "Hip Hop Kit", [[0, 157, 24]]],
    [21, 18, 30, "magenta", "Deep Round Synth Bass", bass, bassTicks, { from: 22, every: 4, notes: bass, ticks: bassTicks }]
);
for (const row of [10, 11, 12, 13]) regions.push([row, 16, 18, "purple", "Orchestra Violin Section 1", violin2]);
for (const row of [22, 23]) {
    regions.push([row, 10, 16, "orange", "Rock Kit", kitLong, [], { from: 15, every: 1, notes: dashes(0, 80, 21.12, 10, 24) }]);
    regions.push([row, 16, 18, "orange", "Rock Kit", kitShort]);
}
for (const row of [24, 25]) {
    const loop = from => ({ from, every: .5, notes: kitLoop });
    regions.push([row, 18, 19.5, "orange", "Rock Kit", kitBeat, [], loop(18.5)]);
    regions.push([row, 19.5, 20, "orange", "Rock Kit", kitEnd]);
    regions.push([row, 20, 23.5, "orange", "Rock Kit", kitBeat, [], loop(20.5)]);
    regions.push([row, 23.5, 24, "orange", "Rock Kit", kitEnd]);
    regions.push([row, 24, 25, "orange", "Rock Kit", kitBeat, [], loop(24.5)]);
    regions.push([row, 25, 25.5, "orange", "Rock Kit", at(24, [0, 6], [9, 12], [15, 35], [36, 41])]);
    regions.push([row, 25.5, 26, "orange", "Rock Kit", kitEnd]);
}
for (const row of [26, 27]) regions.push([row, 16, 18, "orange", "Rock Kit", kitFill]);
for (const row of [27, 28]) {
    regions.push([row, 19, 22, "orange", "Rock Kit", kitTail(68)]);
    regions.push([row, 23, 25.5, "orange", "Rock Kit", kitTail(69)]);
    regions.push([row, 25.5, 28, "orange", "Rock Kit", kitTail(25)]);
}

const noteRects = (notes, dx = 0) => notes.map(([a, b, y, h = 2]) =>
    `<rect x="${a + dx}" y="${y}" width="${b - a}" height="${h}"/>`).join("");
const tickRects = (list = [], dx = 0) => list.map(([x, top, bottom]) =>
    `<rect x="${x + dx}" y="${top}" width="2" height="${bottom - top}" fill="#000" opacity=".3"/>`).join("");

document.getElementById("regions").innerHTML = regions.map(([row, start, end, colour, name, notes, dark, loop]) => {
    const left = barX(start);
    const width = barX(end) - left + 1;
    let art = tickRects(dark) + noteRects(notes);
    if (loop) {
        for (let b = loop.from; b < end; b += loop.every) {
            const x = barX(b) - left;
            art += `<g opacity=".45">${tickRects(loop.ticks, x)}${noteRects(loop.notes, x)}</g>
                <path d="M${x - 3.5} 0h6L${x} 4v2h-1v-2zM${x - 3.5} 33h6L${x} 29v-2h-1v2z" fill="#000"/>`;
        }
    }
    return `<div class="region ${colour}" style="left:${left}px;top:${(row - 1) * ROW}px;width:${width}px">
        <svg width="${width}" height="33">${art}</svg><span class="region-name">${name}</span></div>`;
}).join("");

// ---------- faders ----------
const scale = [[0, 8], [1, 24], [2, 37], [3, 49], [4, 59], [5, 68], [6, 76], [7, 84], [9, 97], [12, 110], [15, 120], [20, 132], [30, 140]];
document.querySelectorAll(".fader").forEach(el => {
    const cap = Number(el.dataset.cap) + 6;
    let s = `<rect x="15" y="6" width="4" height="138" fill="#1c1c1c"/><rect x="47.500" y="6.500" width="9" height="137" fill="#1d1f1c" stroke="#181818"/>
        <rect x="48" y="7" width="8" height="48" fill="#2b2a1b"/>`;
    for (const y of [8, 28, 48, 67, 82, 99, 116, 122, 132, 137, 142]) s += `<rect x="5" y="${y}" width="10" height="1" fill="#737373"/>`;
    for (let y = 12; y < 142; y += 5) s += `<rect x="12" y="${y}" width="3" height="1" fill="#6a6a6a"/>`;
    if (el.dataset.mesh) s += `<rect x="6" y="29" width="8" height="${el.dataset.mesh}" fill="#777" opacity=".5"/>`;
    for (const [label, y] of scale) s += `<text class="fader-label" x="43.500" y="${y + 3}">${label}</text><rect x="44" y="${y}" width="3" height="1" fill="#808080"/>`;
    s += `<rect x="7" y="${cap}" width="19" height="40" rx="1" fill="#222"/><rect x="8" y="${cap + 1}" width="17" height="6" fill="#b4b4b4"/>`;
    for (let i = 0; i < 11; i++) {
        s += `<rect x="8" y="${cap + 7 + i * 2}" width="17" height="1" fill="hsl(0 0% ${i < 5 ? 38 : 45 + i * 3}%)"/>
            <rect x="8" y="${cap + 8 + i * 2}" width="17" height="1" fill="hsl(0 0% ${i < 5 ? 30 : 60 + i * 2}%)"/>`;
    }
    s += `<rect x="8" y="${cap + 29}" width="17" height="5" fill="#ddd"/><rect x="8" y="${cap + 34}" width="17" height="5" fill="#4a4a4a"/>`;
    el.innerHTML = `<svg width="69" height="144">${s}</svg>`;
});
```
